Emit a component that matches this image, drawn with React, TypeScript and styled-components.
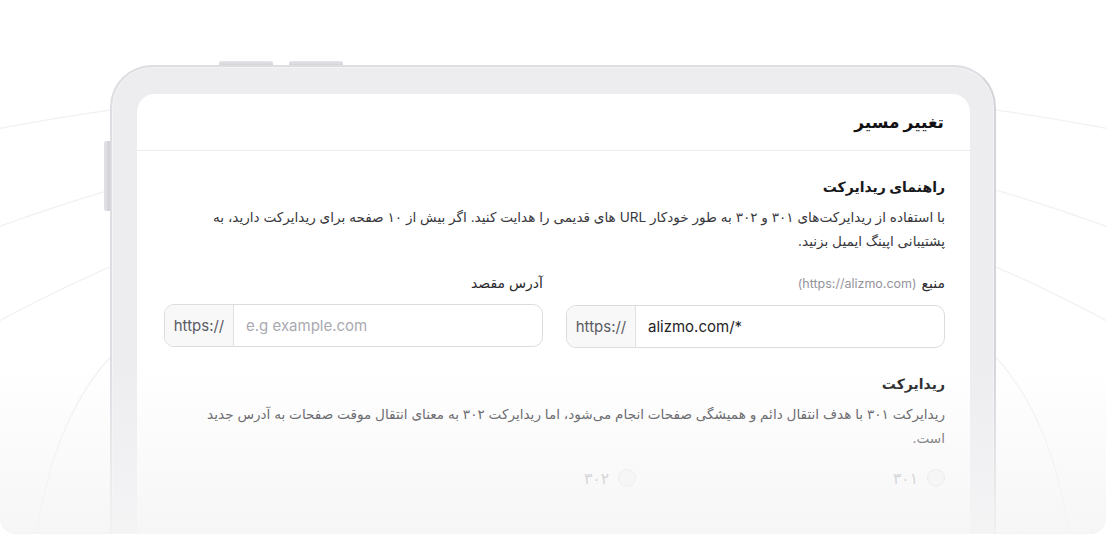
import React from 'react';
import styled, { createGlobalStyle } from 'styled-components';

const GlobalStyle = createGlobalStyle`
  html, body {
    margin: 0;
    padding: 0;
    background: #ffffff;
  }
  * {
    box-sizing: border-box;
  }
`;

const Page = styled.div`
  position: relative;
  width: 1106px;
  height: 534px;
  overflow: hidden;
  background: #ffffff;
  border-radius: 0 0 16px 16px;
  box-shadow: inset 0 -1px 0 #ececef;
  font-family: Inter, 'DejaVu Sans', sans-serif;
`;

const Arcs = styled.svg`
  position: absolute;
  inset: 0;
  width: 100%;
  height: 100%;
  z-index: 0;

  path {
    fill: none;
    stroke: #f2f2f4;
    stroke-width: 1.3;
  }
`;

const Fade = styled.div`
  position: absolute;
  inset: 0;
  z-index: 3;
  pointer-events: none;
  border-radius: 0 0 16px 16px;
  background: linear-gradient(
    to bottom,
    rgba(246, 246, 247, 0) 68%,
    rgba(245, 245, 246, 0.88) 100%
  );
`;

const Stage = styled.div`
  position: relative;
  z-index: 1;
  display: flex;
  justify-content: center;
  padding-top: 65px;
`;

const Device = styled.div`
  position: relative;
  width: 886px;
  height: 520px;
  padding: 27px 24px 0 25px;
  background: #ededf0;
  border: 2px solid #dddde2;
  border-right-color: #d4d4da;
  border-radius: 42px 42px 0 0;
  box-shadow: inset 0 0 0 1px #f3f3f5;
`;

const SideButton = styled.span`
  position: absolute;
  left: -8px;
  top: 74px;
  width: 6px;
  height: 70px;
  border-radius: 2px 0 0 2px;
  background: linear-gradient(to right, #e3e3e7, #cfcfd5);
`;

const TopButton = styled.span<{ $left: number }>`
  position: absolute;
  top: -6px;
  left: ${(p) => p.$left}px;
  width: 54px;
  height: 4px;
  border-radius: 2px 2px 0 0;
  background: linear-gradient(to bottom, #e6e6ea, #d3d3d8);
`;

const Screen = styled.div`
  height: 100%;
  background: #ffffff;
  border-radius: 18px 18px 0 0;
  direction: rtl;
  color: #1c1c1f;
`;

const Header = styled.div`
  display: flex;
  align-items: center;
  height: 57px;
  padding: 0 26px;
  border-bottom: 1px solid #ececef;
`;

const Title = styled.h1`
  margin: 0;
  font-size: 17px;
  font-weight: 700;
  color: #111114;
`;

const Body = styled.div`
  display: flex;
  flex-direction: column;
  padding: 24px 25px 0 27px;
`;

const SectionTitle = styled.h2`
  margin: 0;
  font-size: 14px;
  font-weight: 700;
  line-height: 24px;
  color: #17171a;
`;

const Paragraph = styled.p`
  margin: 6px 0 0;
  font-size: 13.6px;
  line-height: 24px;
  color: #38383d;
`;

const FieldGrid = styled.div`
  display: grid;
  grid-template-columns: 1fr 1fr;
  column-gap: 23px;
  margin-top: 20px;
`;

const Field = styled.div`
  display: flex;
  flex-direction: column;
  gap: 11px;
`;

const Label = styled.label`
  display: flex;
  align-items: baseline;
  gap: 5px;
  font-size: 14px;
  line-height: 20px;
  color: #2a2a2e;
`;

const Hint = styled.span`
  direction: ltr;
  font-family: Inter, sans-serif;
  font-size: 12.5px;
  color: #94949b;
`;

const InputBox = styled.div`
  direction: ltr;
  display: flex;
  height: 43px;
  border: 1px solid #dcdce0;
  border-radius: 10px;
  overflow: hidden;
  background: #ffffff;
`;

const Prefix = styled.span`
  display: flex;
  align-items: center;
  justify-content: center;
  width: 69px;
  flex: 0 0 69px;
  background: #f8f8f9;
  border-right: 1px solid #e1e1e5;
  font-family: Inter, sans-serif;
  font-size: 15px;
  color: #5b5b63;
`;

const Value = styled.span<{ $placeholder?: boolean }>`
  display: flex;
  align-items: center;
  padding-left: 12px;
  font-family: Inter, sans-serif;
  font-size: 15px;
  color: ${(p) => (p.$placeholder ? '#a9a9b1' : '#232327')};
`;

const RedirectBlock = styled.div`
  margin-top: 24px;
`;

const RadioRow = styled.div`
  display: flex;
  margin-top: 18px;
`;

const RadioItem = styled.div`
  display: flex;
  align-items: center;
  gap: 9px;
  width: 309px;
  height: 20px;
`;

const RadioCircle = styled.span`
  width: 18px;
  height: 18px;
  border-radius: 50%;
  border: 1px solid #e2e2e6;
  background: #f7f7f8;
`;

const RadioLabel = styled.span`
  font-size: 15.5px;
  color: #a4a4ab;
`;

const arcPaths = [
  'M -20 132 Q 553 22 1126 132',
  'M -10 230 Q 553 20 1116 230',
  'M -10 326 Q 553 16 1116 326',
  'M 112 355 Q 52 420 36 540',
  'M 994 355 Q 1054 420 1070 540'
];

const App = () => {
  return (
    <>
      <GlobalStyle />
      <Page>
        <Arcs viewBox="0 0 1106 534">
          {arcPaths.map((d) => (
            <path key={d} d={d} />
          ))}
        </Arcs>
        <Stage>
          <Device>
            <TopButton $left={107} />
            <TopButton $left={177} />
            <SideButton />
            <Screen>
              <Header>
                <Title>تغییر مسیر</Title>
              </Header>
              <Body>
                <SectionTitle>راهنمای ریدایرکت</SectionTitle>
                <Paragraph>
                  با استفاده از ریدایرکت‌های ۳۰۱ و ۳۰۲ به طور خودکار URL های قدیمی را هدایت کنید. اگر بیش از ۱۰ صفحه برای ریدایرکت دارید، به
                  <br />
                  پشتیبانی اپینگ ایمیل بزنید.
                </Paragraph>
                <FieldGrid>
                  <Field>
                    <Label>
                      منبع <Hint>(https://alizmo.com)</Hint>
                    </Label>
                    <InputBox>
                      <Prefix>https://</Prefix>
                      <Value>alizmo.com/*</Value>
                    </InputBox>
                  </Field>
                  <Field>
                    <Label>آدرس مقصد</Label>
                    <InputBox>
                      <Prefix>https://</Prefix>
                      <Value $placeholder>e.g example.com</Value>
                    </InputBox>
                  </Field>
                </FieldGrid>
                <RedirectBlock>
                  <SectionTitle>ریدایرکت</SectionTitle>
                  <Paragraph>
                    ریدایرکت ۳۰۱ با هدف انتقال دائم و همیشگی صفحات انجام می‌شود، اما ریدایرکت ۳۰۲ به معنای انتقال موقت صفحات به آدرس جدید
                    <br />
                    است.
                  </Paragraph>
                </RedirectBlock>
                <RadioRow>
                  <RadioItem>
                    <RadioCircle />
                    <RadioLabel>۳۰۱</RadioLabel>
                  </RadioItem>
                  <RadioItem>
                    <RadioCircle />
                    <RadioLabel>۳۰۲</RadioLabel>
                  </RadioItem>
                </RadioRow>
              </Body>
            </Screen>
          </Device>
        </Stage>
        <Fade />
      </Page>
    </>
  );
};

export default App;
